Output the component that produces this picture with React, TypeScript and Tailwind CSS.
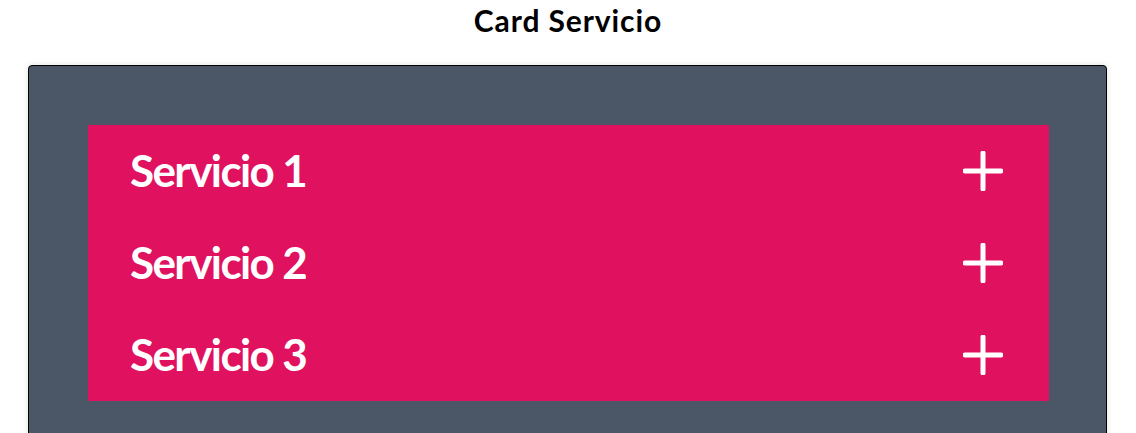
const items = ["Servicio 1", "Servicio 2", "Servicio 3"];

const PlusIcon = () => (
  <svg width="40" height="40" viewBox="0 0 40 40" fill="none">
    <path d="M20 2v36M2 20h36" stroke="white" strokeWidth="5" strokeLinecap="round" />
  </svg>
);

const App = () => {
  return (
    <div className="min-h-screen bg-white font-['Lato',sans-serif]">
      <h1 className="pt-[1px] text-center text-[30px] leading-[38px] font-bold text-black tracking-[0.9px]">
        Card Servicio
      </h1>
      <div className="ml-[28px] mr-[29px] mt-[26px] rounded border border-black bg-[#4b5667] py-[59px] pl-[59px] pr-[57px] shadow-[0_0_6px_rgba(0,0,0,0.12)]">
        <ul className="bg-[#e0115f]">
          {items.map((item) => (
            <li key={item} className="flex h-[92px] items-center justify-between pl-[42px] pr-[46px]">
              <span className="-mt-[3px] text-[44px] font-bold text-white tracking-[-1.6px]">{item}</span>
              <PlusIcon />
            </li>
          ))}
        </ul>
      </div>
    </div>
  );
};

export default App;
